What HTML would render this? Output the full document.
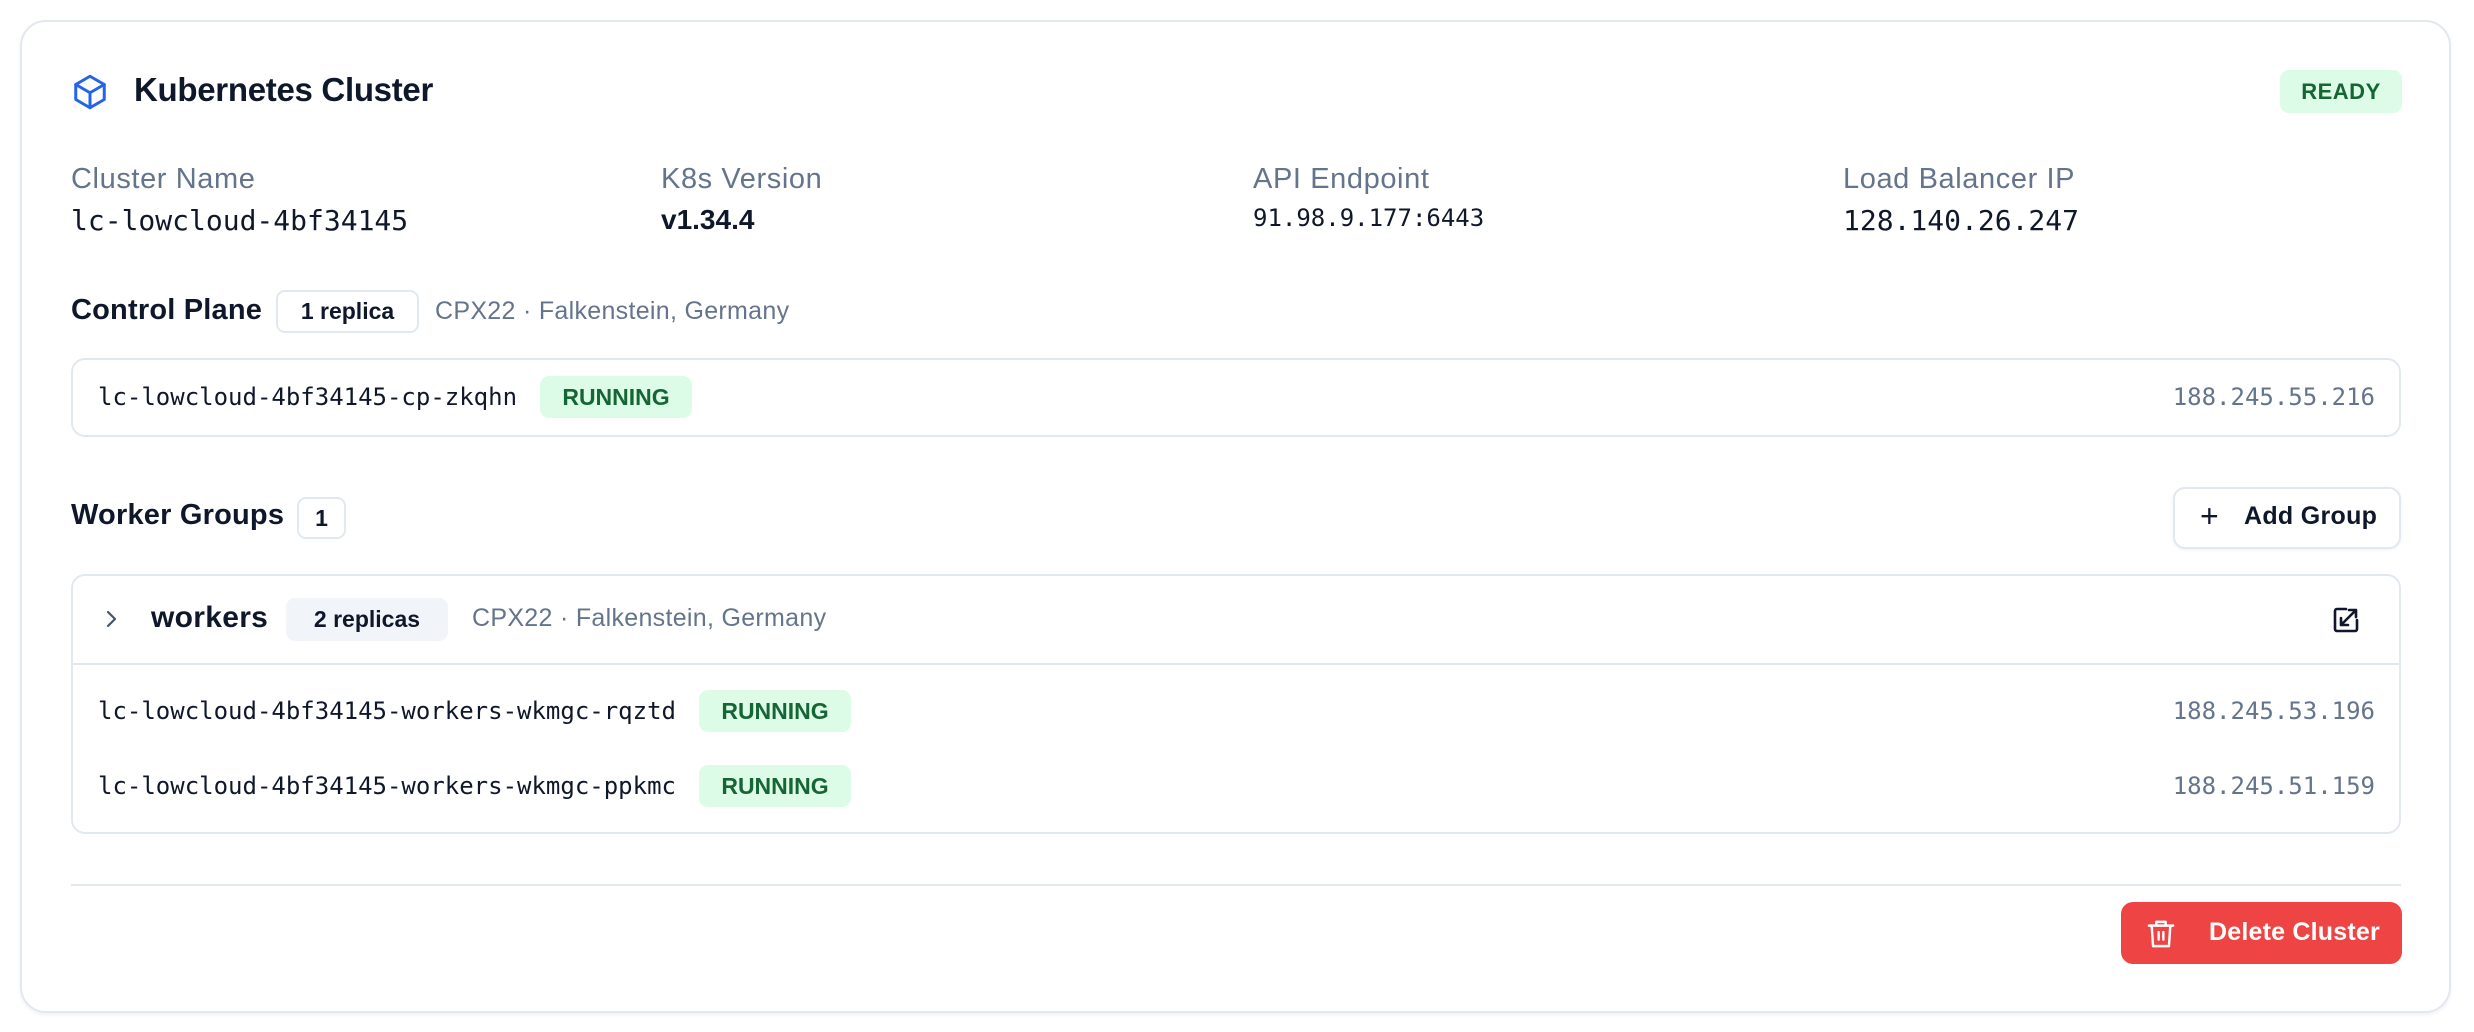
<!DOCTYPE html>
<html><head><meta charset="utf-8"><style>
*{margin:0;padding:0;box-sizing:border-box}
body{width:2474px;height:1032px;background:#fff;position:relative;overflow:hidden;font-family:"Liberation Sans",sans-serif;color:#0f172a}
.a{position:absolute;white-space:nowrap}
.card{left:20px;top:20px;width:2431px;height:993px;border:2px solid #e2e8f0;border-radius:26px;box-shadow:0 2px 4px rgba(15,23,42,.06)}
.lbl{font-size:29px;color:#64748b;top:163px;letter-spacing:0.6px}
.mono{font-family:"DejaVu Sans Mono","Liberation Mono",monospace}
.badge{display:flex;align-items:center;justify-content:center;border-radius:9px;font-weight:bold}
.run{background:#dcfce7;color:#166534;font-size:23px;width:152px;height:42px}
.box{border:2px solid #e2e8f0;border-radius:14px}
.slate{color:#64748b}
.h{font-size:29px;font-weight:bold;color:#0f172a;letter-spacing:0.2px}
.loc{font-size:25px;letter-spacing:0.3px}
</style></head><body>
<div class="a card"></div>

<svg class="a" style="left:72px;top:73px" width="36" height="38" viewBox="0 0 24 24" fill="none" stroke="#2563eb" stroke-width="2" stroke-linejoin="round" stroke-linecap="round"><path d="M12 1.5 21.5 7v10L12 22.5 2.5 17V7z"/><path d="M2.5 7 12 12.5 21.5 7M12 12.5v10"/></svg>
<div class="a" style="left:134px;top:71px;font-size:33px;font-weight:bold;letter-spacing:-0.3px">Kubernetes Cluster</div>
<div class="a badge" style="left:2280px;top:70px;width:122px;height:43px;background:#dcfce7;color:#166534;font-size:22px;letter-spacing:.5px">READY</div>

<div class="a lbl" style="left:71px">Cluster Name</div>
<div class="a lbl" style="left:661px">K8s Version</div>
<div class="a lbl" style="left:1253px">API Endpoint</div>
<div class="a lbl" style="left:1843px">Load Balancer IP</div>
<div class="a mono" style="left:71px;top:204px;font-size:28px">lc-lowcloud-4bf34145</div>
<div class="a" style="left:661px;top:204px;font-size:28px;font-weight:bold">v1.34.4</div>
<div class="a mono" style="left:1253px;top:204px;font-size:24px">91.98.9.177:6443</div>
<div class="a mono" style="left:1843px;top:204px;font-size:28px">128.140.26.247</div>

<div class="a h" style="left:71px;top:294px">Control Plane</div>
<div class="a badge" style="left:276px;top:290px;width:143px;height:43px;border:2px solid #e2e8f0;font-size:23px">1 replica</div>
<div class="a slate loc" style="left:435px;top:297px">CPX22 · Falkenstein, Germany</div>

<div class="a box" style="left:71px;top:358px;width:2330px;height:79px"></div>
<div class="a mono" style="left:98px;top:383px;font-size:24px">lc-lowcloud-4bf34145-cp-zkqhn</div>
<div class="a badge run" style="left:540px;top:376px">RUNNING</div>
<div class="a mono slate" style="right:99px;top:383px;font-size:24px">188.245.55.216</div>

<div class="a h" style="left:71px;top:499px">Worker Groups</div>
<div class="a badge" style="left:297px;top:497px;width:49px;height:42px;border:2px solid #e2e8f0;font-size:23px">1</div>
<div class="a" style="left:2173px;top:487px;width:228px;height:62px;border:2px solid #e2e8f0;border-radius:12px;box-shadow:0 1px 3px rgba(15,23,42,.06)"></div>
<div class="a" style="left:2200px;top:498px;font-size:32px;font-weight:300">+</div>
<div class="a" style="left:2244px;top:502px;font-size:25px;font-weight:bold;letter-spacing:0.3px">Add Group</div>

<div class="a box" style="left:71px;top:574px;width:2330px;height:260px"></div>
<div class="a" style="left:73px;top:663px;width:2326px;height:2px;background:#e2e8f0"></div>
<svg class="a" style="left:102px;top:607px" width="18" height="24" viewBox="0 0 18 24" fill="none" stroke="#475569" stroke-width="2.2" stroke-linecap="round" stroke-linejoin="round"><path d="M6 5l7 7-7 7"/></svg>
<div class="a" style="left:151px;top:601px;font-size:30px;font-weight:bold;letter-spacing:0.3px">workers</div>
<div class="a badge" style="left:286px;top:598px;width:162px;height:43px;background:#f1f5f9;font-size:23px">2 replicas</div>
<div class="a slate loc" style="left:472px;top:604px">CPX22 · Falkenstein, Germany</div>
<svg class="a" style="left:2333px;top:607px" width="26" height="26" viewBox="0 0 26 26" fill="none" stroke="#0f172a" stroke-width="2.6" stroke-linecap="round" stroke-linejoin="round"><path d="M13 2H4a2 2 0 0 0-2 2v18a2 2 0 0 0 2 2h18a2 2 0 0 0 2-2v-9"/><path d="M23 3 8 18M16 3h7v7M8 11v7h7"/></svg>

<div class="a mono" style="left:98px;top:697px;font-size:24px">lc-lowcloud-4bf34145-workers-wkmgc-rqztd</div>
<div class="a badge run" style="left:699px;top:690px">RUNNING</div>
<div class="a mono slate" style="right:99px;top:697px;font-size:24px">188.245.53.196</div>
<div class="a mono" style="left:98px;top:772px;font-size:24px">lc-lowcloud-4bf34145-workers-wkmgc-ppkmc</div>
<div class="a badge run" style="left:699px;top:765px">RUNNING</div>
<div class="a mono slate" style="right:99px;top:772px;font-size:24px">188.245.51.159</div>

<div class="a" style="left:71px;top:884px;width:2330px;height:2px;background:#e2e8f0"></div>
<div class="a" style="left:2121px;top:902px;width:281px;height:62px;background:#ef4444;border-radius:12px"></div>
<svg class="a" style="left:2147px;top:919px" width="28" height="30" viewBox="0 0 30 32" fill="none" stroke="#fff" stroke-width="2.6" stroke-linecap="round" stroke-linejoin="round"><path d="M2 7h26M10 7V3h10v4M5 7l1.5 22h17L25 7M12.5 14v8M17.5 14v8"/></svg>
<div class="a" style="left:2209px;top:918px;font-size:25px;font-weight:bold;color:#fff;letter-spacing:0.2px">Delete Cluster</div>
</body></html>
